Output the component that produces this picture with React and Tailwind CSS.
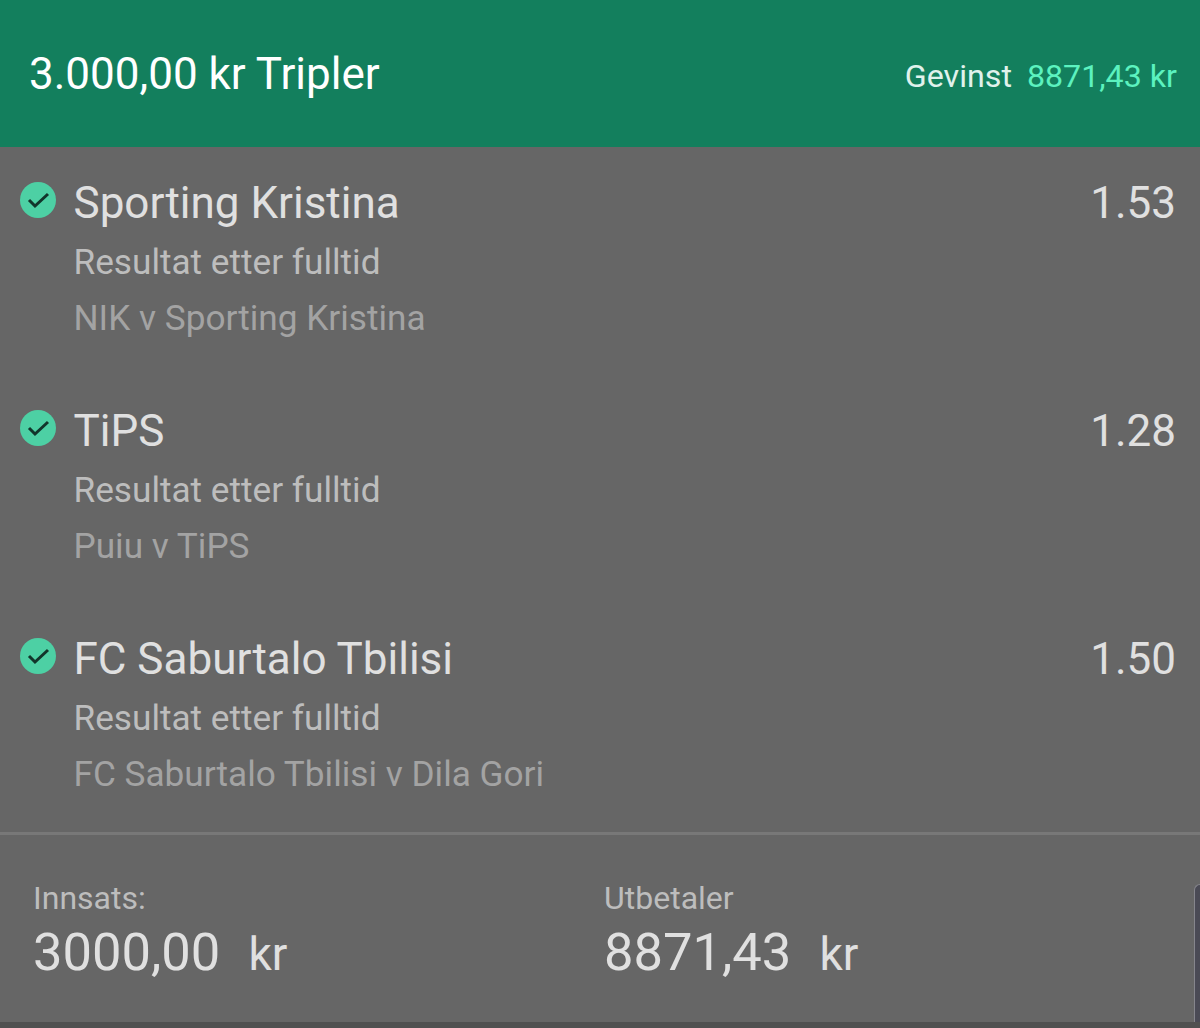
import React from 'react';

const legs = [
  { name: 'Sporting Kristina', odds: '1.53', match: 'NIK v Sporting Kristina' },
  { name: 'TiPS', odds: '1.28', match: 'Puiu v TiPS' },
  { name: 'FC Saburtalo Tbilisi', odds: '1.50', match: 'FC Saburtalo Tbilisi v Dila Gori' },
];

const CheckBadge = () => (
  <svg width="36" height="36" viewBox="0 0 36 36" className="shrink-0">
    <circle cx="18" cy="18" r="18" fill="#4dd0a4" />
    <path d="M9 18 L15 24 L28 12" fill="none" stroke="#12352b" strokeWidth="3" />
  </svg>
);

const App = () => {
  return (
    <div className="relative w-[1200px] h-[1028px] overflow-hidden bg-[#666666] font-['Roboto',sans-serif]">
      {/* Header */}
      <div className="h-[147px] bg-[#137f5d] pl-[29px] pr-[23px] flex items-center justify-between">
        <span className="text-[44px] leading-none text-white">3.000,00 kr Tripler</span>
        <div className="flex items-center gap-[15px] pt-[6px] text-[32.2px] leading-none">
          <span className="text-[#e0f2ec]">Gevinst</span>
          <span className="text-[#5cf2bf]">8871,43 kr</span>
        </div>
      </div>

      {/* Legs */}
      <div className="pt-[28px]">
        {legs.map(leg => (
          <div key={leg.name} className="h-[228px] pl-[20px] pr-[24px] flex items-start gap-[17.5px]">
            <div className="pt-[7px]">
              <CheckBadge />
            </div>
            <div className="flex-1">
              <div className="flex items-center justify-between h-[56px] text-[44px] text-[#e0e0e0]">
                <span>{leg.name}</span>
                <span>{leg.odds}</span>
              </div>
              <div className="h-[56px] leading-[62px] text-[35.2px] text-[#bdbdbd]">Resultat etter fulltid</div>
              <div className="h-[56px] leading-[62px] text-[35.2px] text-[#a3a3a3]">{leg.match}</div>
            </div>
          </div>
        ))}
      </div>

      {/* Stake and payout */}
      <div className="mt-[-27px] border-t-[3px] border-[#787878] h-[190px] pl-[33px] pt-[44px] flex">
        <div className="w-[571px]">
          <div className="text-[32px] leading-[38px] text-[#bdbdbd]">Innsats:</div>
          <div className="flex items-baseline gap-[28px] leading-[60px] mt-[5px] text-[#e0e0e0]">
            <span className="text-[52.5px]">3000,00</span>
            <span className="text-[46px]">kr</span>
          </div>
        </div>
        <div>
          <div className="text-[32px] leading-[38px] text-[#bdbdbd]">Utbetaler</div>
          <div className="flex items-baseline gap-[28px] leading-[60px] mt-[5px] text-[#e0e0e0]">
            <span className="text-[52.5px]">8871,43</span>
            <span className="text-[46px]">kr</span>
          </div>
        </div>
      </div>

      {/* Next card peeking in */}
      <div className="absolute right-0 top-[884px] w-[6px] h-[138px] rounded-tl-[8px] bg-[#4a4a55] border-l border-t border-[#85858c]" />
      <div className="absolute left-0 bottom-0 w-full h-[6px] bg-[#505050]" />
    </div>
  );
};

export default App;
